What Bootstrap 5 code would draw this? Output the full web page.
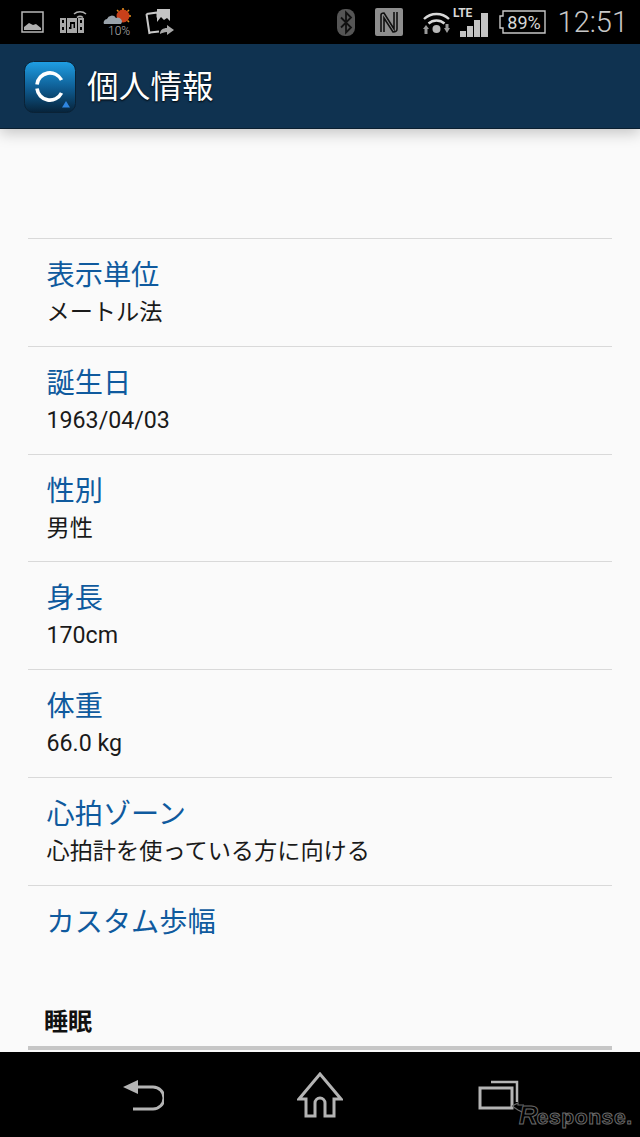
<!DOCTYPE html>
<html lang="ja">
<head>
    <title>個人情報</title>
    <meta charset="UTF-8">
    <link rel="stylesheet" href="https://cdn.jsdelivr.net/npm/bootstrap@5.3.2/dist/css/bootstrap.min.css">
    <style>
        html, body { width: 640px; height: 1137px; overflow: hidden; }
        body { background: #fafafa; font-family: Roboto, "Noto Sans CJK JP", sans-serif; }
        .phone { height: 1137px; }
        .status-bar { height: 44px; background: #000; padding: 0 12px 0 20px; flex-shrink: 0; }
        .status-icons-left { gap: 15px; }
        .status-icons-right svg { display: block; }
        .gap-photo { margin-left: -3px; }
        .gap-nfc { margin-left: 20px; }
        .gap-wifi { margin-left: 19px; }
        .gap-signal { margin-left: 1px; }
        .gap-battery { margin-left: 9px; }
        .clock { color: #c8c8c8; font-size: 29px; font-weight: 300; line-height: 44px; margin-left: 11px; }
        .app-header { height: 85px; background: #0f3250; padding: 2px 0 0 24px; gap: 11px; border-bottom: 1px solid #0a1f30; box-shadow: 0 4px 14px rgba(0,0,0,.22); position: relative; flex-shrink: 0; }
        .app-title { color: #fff; font-size: 31.5px; line-height: 1; letter-spacing: .2px; text-shadow: 0 1px 2px #000; margin-top: 2px; }
        .content { padding: 109px 28px 0; }
        .info-list { --bs-list-group-bg: transparent; --bs-list-group-item-padding-x: 18.5px; --bs-list-group-item-padding-y: 0; }
        .info-list .info-row { height: 107.8px; border-width: 1px 0 0; border-style: solid; border-color: #d9d9d9; padding-top: 18px; }
        .info-list .info-row.last-row { height: 92px; }
        .info-label { color: #0f5a9e; font-size: 28.2px; line-height: 38px; }
        .info-value { color: #1a1a1a; font-size: 23.2px; line-height: 32px; margin-top: 1px; }
        .section-title { color: #111; font-size: 24px; font-weight: 700; line-height: 32px; margin: 29px 0 0 16px; }
        .section-rule { height: 4px; background: #c6c6c6; margin-top: 8px; }
        .nav-bar { height: 85px; background: #000; position: relative; flex-shrink: 0; }
        .nav-slot { width: 177px; }
        .nav-recents { position: relative; left: 1px; }
        .watermark { position: absolute; left: 519px; top: 50px; font-family: "Liberation Sans", sans-serif; font-size: 21px; font-weight: 700; letter-spacing: .6px; color: #000; -webkit-text-stroke: 1px #6a6a6a; line-height: 1; }
        .watermark-r { font-size: 26px; font-style: italic; letter-spacing: -1px; }
        .watermark-arrow { position: absolute; left: 508px; top: 50px; }
    </style>
</head>
<body>
    <div class="phone d-flex flex-column">
        <!-- barra de estado -->
        <div class="status-bar d-flex align-items-center justify-content-between">
            <div class="status-icons-left d-flex align-items-center">
                <svg width="25" height="24" viewBox="0 0 25 24" fill="none"><rect x="2" y="2" width="21" height="20" stroke="#b8b8b8" stroke-width="1.500"/><path d="M4 20v-3l5-4 4 2 3-1 5 4v2z" fill="#b0b0b0"/></svg>
                <svg width="28" height="26" viewBox="0 0 28 26" fill="none"><path d="M0 9h24v15H0z" fill="#a8a8a8"/><path d="M2 11h2v3H2zM2 18h2v3H2zM20 11h2v3h-2zM20 18h2v3h-2z" fill="#000"/><path d="M6 9h1v15H6zM17 9h1v15h-1z" fill="#000"/><path d="M10 13h5v6h-1.500v-4h-2v5H9v-2h1z" fill="#000"/><path d="M14 5a9 9 0 0 1 12 0M17 8.500a5 5 0 0 1 6 0" stroke="#b0b0b0" stroke-width="1.500"/></svg>
                <svg width="30" height="32" viewBox="0 0 30 32"><circle cx="20" cy="10" r="6.500" fill="#c8401a"/><path d="M20 2v2M28 10h-2M26 4l-1.500 1.500M14 4l1.500 1.500M26 16l-1.500-1.500" stroke="#e8901c" stroke-width="1.500"/><path d="M1 18a3.500 3.500 0 0 1 3-5 5 5 0 0 1 9-1 4 4 0 0 1 5 6z" fill="#9aa3ab"/><text x="5" y="28.500" font-size="12" fill="#b4b4b4" font-family="Roboto" font-weight="300">10%</text></svg>
                <svg class="gap-photo" width="30" height="28" viewBox="0 0 30 28" fill="none"><path d="M1.500 6l11-1.500v5M5 24.500l9-1" stroke="#c8c8c8" stroke-width="2"/><path d="M1.500 6l3 20" stroke="#c8c8c8" stroke-width="2"/><path d="M12 1h13v16H12z" fill="#c4c4c4"/><path d="M12 14l4-5 3 3 3-2 3 3v4H12z" fill="#000"/><path d="M15 26c0-4 3-6 7-6v-3l7 5-7 5v-3c-3 0-5 1-7 2z" fill="#a8a8a8"/></svg>
            </div>
            <div class="status-icons-right d-flex align-items-center">
                <svg width="18" height="27" viewBox="0 0 18 27" fill="none"><rect width="18" height="27" rx="8" fill="#555"/><path d="M4 8.500l10 10-5 5v-20l5 5-10 10" stroke="#111" stroke-width="1.800"/></svg>
                <svg class="gap-nfc" width="28" height="28" viewBox="0 0 28 28" fill="none"><rect width="28" height="28" rx="2" fill="#8e8e8e"/><path d="M6 24V7c0-1 1-2 3-2l10 16V4" stroke="#111" stroke-width="1.600"/><path d="M9 24V10l9 14c2 0 4-1 4-3V4" stroke="#111" stroke-width="1.600"/></svg>
                <svg class="gap-wifi" width="30" height="26" viewBox="0 0 30 26" fill="none"><path d="M2 10a18 18 0 0 1 25 0M6.500 14.500a12 12 0 0 1 16 0" stroke="#d8d8d8" stroke-width="2.400"/><circle cx="14.500" cy="20" r="4" fill="#b8b8b8"/><path d="M1 20l3-4 3 4H5.500v5h-3v-5zM22 19h1.500v-4h3v4H28l-3 5z" fill="#9a9a9a"/></svg>
                <svg class="gap-signal" width="36" height="30" viewBox="0 0 36 30"><text x="0" y="10" font-size="12" font-weight="700" fill="#d8d8d8" font-family="Roboto">LTE</text><path d="M7 24h6v6H7zM14 19h6v11h-6zM21 13h6v17h-6zM28 6h7v24h-7z" fill="#c4c4c4"/></svg>
                <svg class="gap-battery" width="49" height="26" viewBox="0 0 49 26" fill="none"><path d="M5 2h42v22H5v-5H2V7h3z" stroke="#c8c8c8" stroke-width="1.400"/><text x="26" y="19.500" text-anchor="middle" font-size="18" fill="#d8d8d8" font-family="Roboto">89%</text></svg>
                <span class="clock">12:51</span>
            </div>
        </div>

        <!-- cabecera -->
        <div class="app-header d-flex align-items-center">
            <svg width="52" height="52" viewBox="0 0 52 52" fill="none">
                <defs><linearGradient id="logoFondo" x1="0" y1="0" x2="0" y2="1"><stop offset="0" stop-color="#1f9fe4"/><stop offset=".5" stop-color="#0f5f96"/><stop offset="1" stop-color="#07233a"/></linearGradient></defs>
                <rect x=".5" y=".5" width="51" height="51" rx="9" fill="url(#logoFondo)" stroke="#0a2236"/>
                <path d="M37.500 19A13 13 0 0 0 13 23.500" stroke="#fff" stroke-width="3.600"/>
                <path d="M13 27.500A13 13 0 0 0 37.500 32" stroke="#fff" stroke-width="3.600"/>
                <path d="M42 40l4 6.500h-8z" fill="#2f86e0"/>
            </svg>
            <span class="app-title">個人情報</span>
        </div>

        <!-- contenido -->
        <div class="content flex-grow-1">
            <ul class="info-list list-group list-group-flush" id="listaInfo"></ul>
            <div class="section-title">睡眠</div>
            <div class="section-rule"></div>
        </div>

        <!-- barra de navegacion -->
        <div class="nav-bar d-flex align-items-center justify-content-center">
            <div class="nav-slot d-flex justify-content-center">
                <svg width="42" height="34" viewBox="0 0 42 34" fill="none"><path d="M1 9l15-7v14z" fill="#b4b4b4"/><path d="M14 9h17a11 11 0 0 1 0 22H11" stroke="#b4b4b4" stroke-width="3"/></svg>
            </div>
            <div class="nav-slot d-flex justify-content-center">
                <svg width="46" height="46" viewBox="0 0 46 46" fill="none"><path d="M23 2L2 27h7v17h9V31a5 5 0 0 1 10 0v13h9V27h7z" stroke="#b4b4b4" stroke-width="3"/></svg>
            </div>
            <div class="nav-slot d-flex justify-content-center">
                <svg class="nav-recents" width="42" height="30" viewBox="0 0 42 30" fill="none"><path d="M14 2h26v20" stroke="#b4b4b4" stroke-width="2.500"/><rect x="3" y="8" width="32" height="20" stroke="#b4b4b4" stroke-width="3"/></svg>
            </div>
            <svg class="watermark-arrow" width="16" height="14" viewBox="0 0 16 14" fill="none"><path d="M4 4l6-3v2h6M4 4l6 4 6 3" stroke="#6a6a6a" stroke-width="1.200"/></svg>
            <span class="watermark"><span class="watermark-r">R</span>esponse.</span>
        </div>
    </div>

    <script src="https://cdn.jsdelivr.net/npm/bootstrap@5.3.2/dist/js/bootstrap.bundle.min.js"></script>
    <script>
        const filas = [
            ['表示単位', 'メートル法'],
            ['誕生日', '1963/04/03'],
            ['性別', '男性'],
            ['身長', '170cm'],
            ['体重', '66.0 kg'],
            ['心拍ゾーン', '心拍計を使っている方に向ける'],
            ['カスタム歩幅', '']
        ];
        const lista = document.getElementById('listaInfo');
        filas.forEach((fila, i) => {
            const item = document.createElement('li');
            item.className = 'list-group-item info-row' + (i === filas.length - 1 ? ' last-row' : '');
            item.innerHTML = `<div class="info-label">${fila[0]}</div>` + (fila[1] ? `<div class="info-value">${fila[1]}</div>` : '');
            lista.appendChild(item);
        });
    </script>
</body>
</html>
